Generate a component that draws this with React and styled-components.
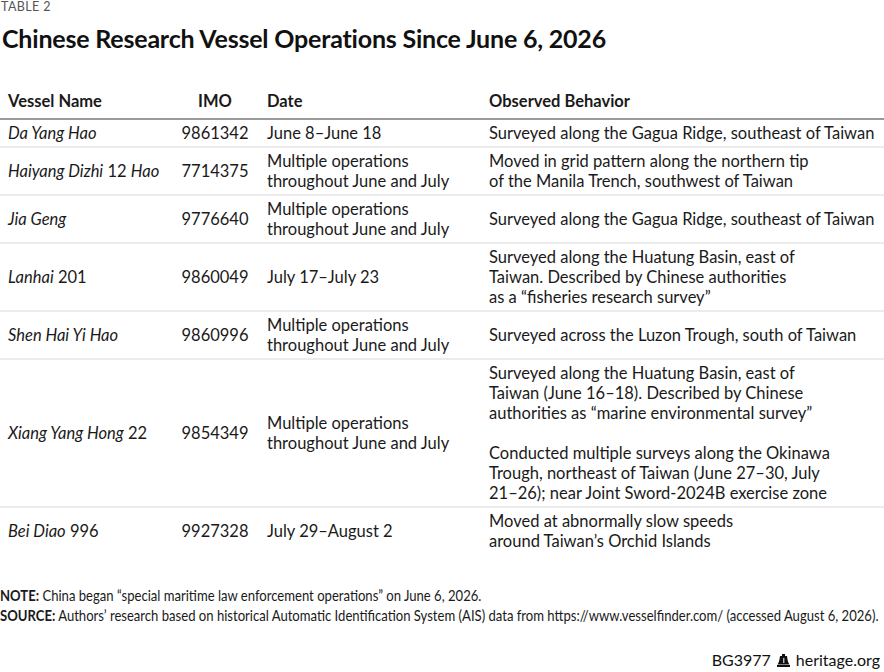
import styled, { createGlobalStyle } from 'styled-components'

const GlobalStyle = createGlobalStyle`
  body {
    margin: 0;
    background: #fff;
    color: #1a1a1a;
    font-family: Lato, "Open Sans", sans-serif;
  }
`

const Page = styled.div`
  width: 884px;
  height: 672px;
  display: flex;
  flex-direction: column;
  overflow: hidden;
`

const Kicker = styled.div`
  font-size: 12.5px;
  line-height: 13px;
  letter-spacing: 0.4px;
  color: #555;
  padding: 0 0 0 1px;
`

const Title = styled.h1`
  margin: 10px 0 0 2px;
  font-size: 25px;
  line-height: 30px;
  font-weight: 700;
  color: #111;
  letter-spacing: -0.2px;
`

const Table = styled.table`
  margin-top: 34px;
  width: 884px;
  table-layout: fixed;
  border-collapse: collapse;
  font-size: 16.5px;
  line-height: 20px;
`

const Th = styled.th`
  box-sizing: border-box;
  text-align: ${p => p.$align || 'left'};
  font-weight: 700;
  padding: 4px 0 7px ${p => p.$pl || 0}px;
  border-bottom: 2px solid #9a9a9a;
  width: ${p => (p.$w ? `${p.$w}px` : 'auto')};
  white-space: nowrap;
`

const Row = styled.tr`
  border-bottom: 2px solid #ececec;
  &:last-child {
    border-bottom: none;
  }
`

const Td = styled.td`
  box-sizing: border-box;
  text-align: ${p => p.$align || 'left'};
  padding: 3px 0 3px ${p => p.$pl || 0}px;
  vertical-align: middle;
  white-space: nowrap;
`

const Name = styled.span`
  font-style: italic;
`

const Para = styled.div`
  & + & {
    margin-top: 20px;
  }
`

const Notes = styled.div`
  margin-top: 31px;
  font-size: 15px;
  line-height: 20px;
  white-space: nowrap;
  transform: scaleX(0.872);
  transform-origin: left center;
  b {
    font-weight: 700;
  }
`

const Footer = styled.div`
  margin-top: auto;
  padding: 0 4px 2px 0;
  display: flex;
  justify-content: flex-end;
  align-items: center;
  gap: 6px;
  font-size: 16px;
  line-height: 20px;
  color: #111;
`

const Bell = () => (
  <svg width="13" height="13" viewBox="0 0 13 13">
    <rect x="5" y="0" width="3" height="2" fill="#111" />
    <path d="M3 2 H10 C10.5 5 10.6 8 12.5 10.5 H0.5 C2.4 8 2.5 5 3 2 Z" fill="#111" />
    <rect x="0" y="11" width="13" height="2" fill="#111" />
    <line x1="6.8" y1="4" x2="6.8" y2="9" stroke="#fff" strokeWidth="1" />
  </svg>
)

const rows = [
  { name: <><Name>Da Yang Hao</Name></>, imo: '9861342', date: ['June 8–June 18'], obs: [['Surveyed along the Gagua Ridge, southeast of Taiwan']] },
  { name: <><Name>Haiyang Dizhi</Name> 12 <Name>Hao</Name></>, imo: '7714375', date: ['Multiple operations', 'throughout June and July'], obs: [['Moved in grid pattern along the northern tip', 'of the Manila Trench, southwest of Taiwan']] },
  { name: <><Name>Jia Geng</Name></>, imo: '9776640', date: ['Multiple operations', 'throughout June and July'], obs: [['Surveyed along the Gagua Ridge, southeast of Taiwan']] },
  { name: <><Name>Lanhai</Name> 201</>, imo: '9860049', date: ['July 17–July 23'], obs: [['Surveyed along the Huatung Basin, east of', 'Taiwan. Described by Chinese authorities', 'as a “fisheries research survey”']] },
  { name: <><Name>Shen Hai Yi Hao</Name></>, imo: '9860996', date: ['Multiple operations', 'throughout June and July'], obs: [['Surveyed across the Luzon Trough, south of Taiwan']] },
  { name: <><Name>Xiang Yang Hong</Name> 22</>, imo: '9854349', date: ['Multiple operations', 'throughout June and July'], obs: [['Surveyed along the Huatung Basin, east of', 'Taiwan (June 16–18). Described by Chinese', 'authorities as “marine environmental survey”'], ['Conducted multiple surveys along the Okinawa', 'Trough, northeast of Taiwan (June 27–30, July', '21–26); near Joint Sword-2024B exercise zone']] },
  { name: <><Name>Bei Diao</Name> 996</>, imo: '9927328', date: ['July 29–August 2'], obs: [['Moved at abnormally slow speeds', 'around Taiwan’s Orchid Islands']] },
]

const Lines = ({ lines }) => lines.map((l, i) => <div key={i}>{l}</div>)

export default function App() {
  return (
    <Page>
      <GlobalStyle />
      <Kicker>TABLE 2</Kicker>
      <Title>Chinese Research Vessel Operations Since June 6, 2026</Title>
      <Table>
        <thead>
          <tr>
            <Th $w={178} $pl={8}>Vessel Name</Th>
            <Th $w={74} $align="center">IMO</Th>
            <Th $w={224} $pl={15}>Date</Th>
            <Th $pl={13}>Observed Behavior</Th>
          </tr>
        </thead>
        <tbody>
          {rows.map((r, i) => (
            <Row key={i}>
              <Td $pl={8}>{r.name}</Td>
              <Td $align="center">{r.imo}</Td>
              <Td $pl={15}><Lines lines={r.date} /></Td>
              <Td $pl={13}>
                {r.obs.map((p, j) => (
                  <Para key={j}><Lines lines={p} /></Para>
                ))}
              </Td>
            </Row>
          ))}
        </tbody>
      </Table>
      <Notes>
        <div><b>NOTE:</b> China began “special maritime law enforcement operations” on June 6, 2026.</div>
        <div><b>SOURCE:</b> Authors’ research based on historical Automatic Identification System (AIS) data from https://www.vesselfinder.com/ (accessed August 6, 2026).</div>
      </Notes>
      <Footer>
        <span>BG3977</span>
        <Bell />
        <span>heritage.org</span>
      </Footer>
    </Page>
  )
}
